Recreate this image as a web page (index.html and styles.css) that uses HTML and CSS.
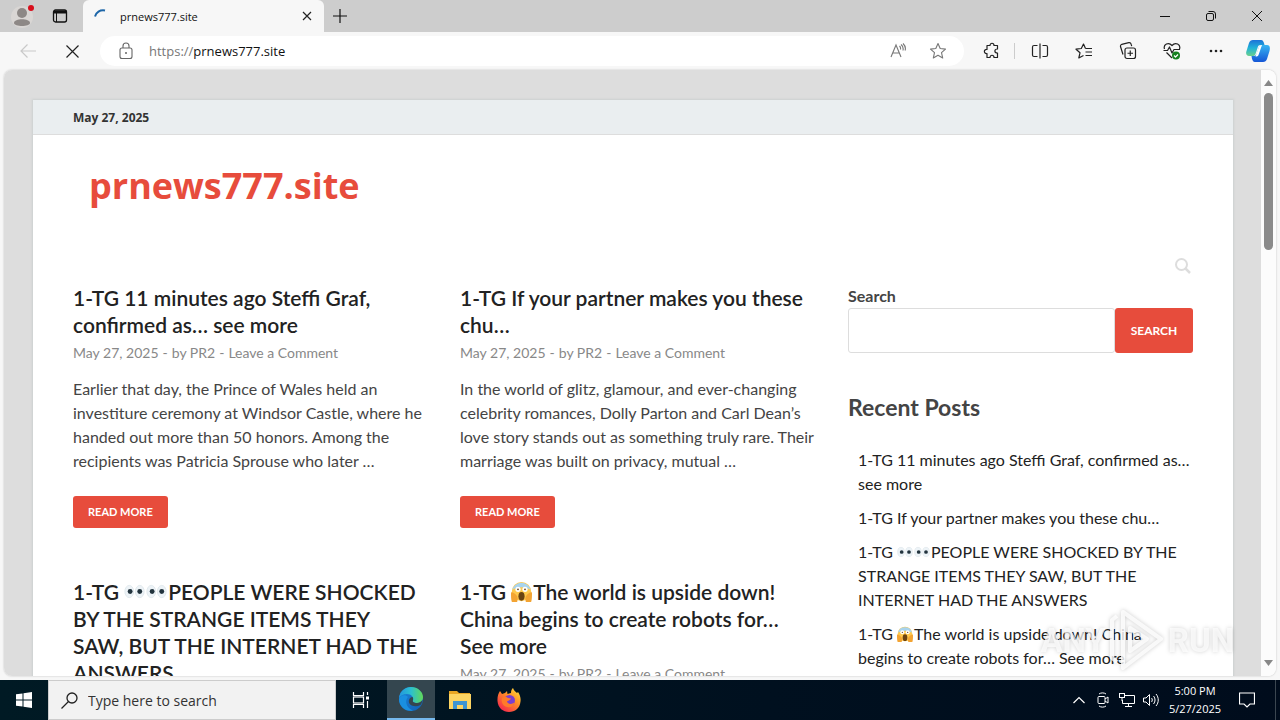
FILE: index.html
```html
<!DOCTYPE html>
<html lang="en">
<head>
    <meta charset="UTF-8">
    <meta name="viewport" content="width=device-width, initial-scale=1.0">
    <title>prnews777.site</title>
    <link rel="stylesheet" href="styles.css">
</head>
<body>
    <!-- shared shapes -->
    <svg class="defs" width="0" height="0" aria-hidden="true">
        <symbol id="eyes" viewBox="0 0 24 24">
            <ellipse cx="6" cy="12" rx="5" ry="7" fill="#edf3f7" stroke="#dfe7ec" stroke-width="1"/>
            <ellipse cx="18" cy="12" rx="5" ry="7" fill="#edf3f7" stroke="#dfe7ec" stroke-width="1"/>
            <circle cx="7" cy="12" r="2.800" fill="#22333d"/>
            <circle cx="18" cy="12" r="2.800" fill="#22333d"/>
        </symbol>
        <symbol id="scream" viewBox="0 0 24 24">
            <circle cx="12" cy="12" r="11" fill="#ffc94d"/>
            <path d="M1.400 10a11 11 0 0 1 21.200 0c-3-2-6-3-10.600-3s-8 1-10.600 3z" fill="#a8d4ee"/>
            <circle cx="8" cy="9.500" r="3" fill="#fff"/>
            <circle cx="16" cy="9.500" r="3" fill="#fff"/>
            <circle cx="8" cy="9.500" r="1" fill="#5b3f1d"/>
            <circle cx="16" cy="9.500" r="1" fill="#5b3f1d"/>
            <ellipse cx="12" cy="17.500" rx="3.500" ry="5" fill="#6b4312"/>
            <path d="M0 13c2-1 4 1 6 3s2 5 1 8H1c-1-3-1-7-1-11zM24 13c-2-1-4 1-6 3s-2 5-1 8h6c1-3 1-7 1-11z" fill="#f3a433"/>
        </symbol>
    </svg>

    <div class="tab-bar">
        <button class="profile" aria-label="Profile">
            <svg width="24" height="24" viewBox="0 0 24 24"><circle cx="11" cy="13" r="11" fill="#d9d6d4"/><circle cx="11" cy="9" r="5" fill="#8d8886"/><path d="M3 19c0-5 16-5 16 0 0 4-16 4-16 0z" fill="#8d8886"/><circle cx="20" cy="4" r="3" fill="#d80f1c"/></svg>
        </button>
        <button class="workspaces" aria-label="Tab actions">
            <svg width="16" height="16" viewBox="0 0 16 16" fill="none" stroke="#111"><rect x="1.500" y="2" width="13" height="12" rx="2" stroke-width="1.300"/><path d="M2 4h12" stroke-width="3"/><path d="M4.500 4v10"/></svg>
        </button>
        <div class="tab">
            <svg width="16" height="16" viewBox="0 0 16 16" fill="none" stroke="#1d66a8" stroke-width="2"><path d="M2 8.500C3 4.500 7 1.500 12 2.500"/></svg>
            <span class="tab-title">prnews777.site</span>
            <button class="tab-close" aria-label="Close tab">
                <svg width="10" height="10" viewBox="0 0 10 10" stroke="#222" stroke-width="1.200"><path d="M1 1l8 8M9 1l-8 8"/></svg>
            </button>
        </div>
        <button class="new-tab" aria-label="New tab">
            <svg width="14" height="14" viewBox="0 0 14 14" stroke="#111" stroke-width="1.200"><path d="M7 0v14M0 7h14"/></svg>
        </button>
        <div class="window-buttons">
            <button aria-label="Minimize"><svg width="10" height="10" viewBox="0 0 10 10" stroke="#111"><path d="M0 5.500h10"/></svg></button>
            <button aria-label="Restore"><svg width="10" height="10" viewBox="0 0 10 10" fill="none" stroke="#111"><rect x=".5" y="2.500" width="7" height="7" rx="1.500"/><path d="M2.500.5H7a2.500 2.500 0 0 1 2.500 2.500v4.500"/></svg></button>
            <button aria-label="Close"><svg width="10" height="10" viewBox="0 0 10 10" stroke="#111"><path d="M0 0l10 10M10 0L0 10"/></svg></button>
        </div>
    </div>

    <div class="toolbar">
        <button class="tool" aria-label="Back"><svg width="16" height="14" viewBox="0 0 16 14" fill="none" stroke="#c9c9c9" stroke-width="1.200"><path d="M16 7H1M7.500.5L1 7l6.500 6.500"/></svg></button>
        <button class="tool" aria-label="Stop"><svg width="13" height="13" viewBox="0 0 13 13" stroke="#222" stroke-width="1.200"><path d="M.5.5l12 12M12.500.5l-12 12"/></svg></button>
        <div class="address">
            <svg width="16" height="18" viewBox="0 0 16 18" fill="none" stroke="#666" stroke-width="1.100"><rect x="2" y="6" width="12" height="10.500" rx="2"/><path d="M5 6V4a3 3 0 0 1 6 0v2"/><circle cx="8" cy="11" r="1" fill="#666" stroke="none"/></svg>
            <span class="url"><span class="scheme">https://</span>prnews777.site</span>
            <button class="address-button" aria-label="Read aloud"><svg width="18" height="16" viewBox="0 0 18 16" fill="none" stroke="#777" stroke-width="1.100"><path d="M2 14L7 2l5 12M4 10h6"/><path d="M10.500 3c1 1 1.300 2 1 3.500M12 1.500c2 1.500 2.500 3.500 2 6M14 .5c2 2 3 4.500 2 7"/></svg></button>
            <button class="address-button" aria-label="Add to favorites"><svg width="18" height="18" viewBox="0 0 18 18" fill="none" stroke="#777" stroke-width="1.100" stroke-linejoin="round"><path d="M9 1.500l2.200 5 5.300.6-4 3.600 1.200 5.300L9 13.300 4.300 16l1.200-5.300-4-3.600 5.300-.6z"/></svg></button>
        </div>
        <button class="tool" aria-label="Extensions"><svg width="18" height="18" viewBox="0 0 18 18" fill="none" stroke="#222" stroke-width="1.200" stroke-linejoin="round"><path d="M4 3.500h3c0-3 4-3 4 0h3.500V7c-3.500 0-3.500 4 0 4v4.500H11c0-3-4-3-4 0H4v-4c-3.500.5-3.500-4.500 0-4z"/></svg></button>
        <div class="divider"></div>
        <button class="tool" aria-label="Split screen"><svg width="18" height="16" viewBox="0 0 18 16" fill="none" stroke="#222" stroke-width="1.200"><path d="M6.500 2.500H3A1.500 1.500 0 0 0 1.500 4v8A1.500 1.500 0 0 0 3 13.500h3.500M11.500 2.500H15A1.500 1.500 0 0 1 16.500 4v8a1.500 1.500 0 0 1-1.500 1.500h-3.500M9 .5v15"/></svg></button>
        <button class="tool" aria-label="Favorites"><svg width="18" height="16" viewBox="0 0 18 16" fill="none" stroke="#222" stroke-width="1.200" stroke-linejoin="round"><path d="M10.500 5.500L8.500 1 6.300 5.500l-5.300.7 4 3.600-1.200 5.200 4.700-2.500M10.500 5.500H17M10.500 9H17M10.500 12.500H17"/></svg></button>
        <button class="tool" aria-label="Collections"><svg width="18" height="18" viewBox="0 0 18 18" fill="none" stroke="#222" stroke-width="1.200"><rect x="6" y="6" width="10.500" height="10.500" rx="2"/><path d="M11.250 8.500v5.500M8.500 11.250H14M4 12.500L1.500 4.500a2 2 0 0 1 1.300-2.200l7-1.600a2 2 0 0 1 2.300 1.500l.6 2"/></svg></button>
        <button class="tool" aria-label="Browser essentials"><svg width="18" height="18" viewBox="0 0 18 18" fill="none" stroke="#222" stroke-width="1.200" stroke-linejoin="round"><path d="M1.500 7C0 2.500 5.500-.5 9 3.500c3.500-4 9-1 7.500 3.500M.5 8.500h4L6.500 5 9 11l2-3.500h6M3.500 10.500L9 16"/><circle cx="13" cy="13.500" r="4" fill="#16801f" stroke="none"/><path d="M11 13.500l1.500 1.500L15 12.500" stroke="#fff"/></svg></button>
        <button class="tool" aria-label="Settings and more"><svg width="14" height="4" viewBox="0 0 14 4" fill="#222"><circle cx="2" cy="2" r="1.300"/><circle cx="7" cy="2" r="1.300"/><circle cx="12" cy="2" r="1.300"/></svg></button>
        <button class="copilot" aria-label="Copilot">
            <svg width="24" height="24" viewBox="0 0 24 24">
                <defs>
                    <linearGradient id="cp1" x1="0" y1="0" x2="0" y2="1"><stop offset="0" stop-color="#1b72d8"/><stop offset=".5" stop-color="#20b3d8"/><stop offset="1" stop-color="#6bd08c"/></linearGradient>
                    <linearGradient id="cp2" x1="0" y1="0" x2="0" y2="1"><stop offset="0" stop-color="#38b5f2"/><stop offset="1" stop-color="#1556d6"/></linearGradient>
                </defs>
                <path d="M7 1h8c2 0 3 2 3.500 5h-4c-2 0-2.500 1-3 3l-2 6c-.5 1.500-1.500 2-3 2H3c-2.500 0-3.500-2-2.500-5L3 4c.7-2 2-3 4-3z" fill="url(#cp1)"/>
                <path d="M17 23H9c-2 0-3-2-3.500-6h2c2 0 3-1 3.500-3l2-6c.5-1.500 1.500-2 3-2h5c2.500 0 3.500 2 2.500 6l-2.500 8c-.7 2-2 3-4 3z" fill="url(#cp2)"/>
                <path d="M13 8c.5-1.500 1.500-2 3-2l-3.500 10c-.5 1-1.500 1.500-3 1.500z" fill="#fff"/>
            </svg>
        </button>
    </div>

    <div class="viewport">
        <div class="page">
            <div class="site">
                <div class="top-bar">May 27, 2025</div>
                <header class="site-header">
                    <h1 class="site-title"><a href="#">prnews777.site</a></h1>
                </header>
                <nav class="site-nav">
                    <button class="nav-search" aria-label="Open search"><svg width="18" height="18" viewBox="0 0 18 18" fill="none" stroke="#ddd" stroke-width="2"><circle cx="7.500" cy="7.500" r="5.500"/><path d="M11.500 11.500L16 16" stroke-width="2.500"/></svg></button>
                </nav>
                <div class="content">
                    <main class="posts">
                        <article class="post">
                            <h3><a href="#">1-TG 11 minutes ago Steffi Graf, confirmed as… see more</a></h3>
                            <div class="meta"><a href="#">May 27, 2025</a><span class="dash">-</span>by <a href="#">PR2</a><span class="dash">-</span><a href="#">Leave a Comment</a></div>
                            <p>Earlier that day, the Prince of Wales held an investiture ceremony at Windsor Castle, where he handed out more than 50 honors. Among the recipients was Patricia Sprouse who later …</p>
                            <a class="read-more" href="#">READ MORE</a>
                        </article>
                        <article class="post">
                            <h3><a href="#">1-TG If your partner makes you these chu…</a></h3>
                            <div class="meta"><a href="#">May 27, 2025</a><span class="dash">-</span>by <a href="#">PR2</a><span class="dash">-</span><a href="#">Leave a Comment</a></div>
                            <p>In the world of glitz, glamour, and ever-changing celebrity romances, Dolly Parton and Carl Dean’s love story stands out as something truly rare. Their marriage was built on privacy, mutual …</p>
                            <a class="read-more" href="#">READ MORE</a>
                        </article>
                        <article class="post">
                            <h3><a href="#">1-TG <svg class="emoji"><use href="#eyes"/></svg><svg class="emoji"><use href="#eyes"/></svg>PEOPLE WERE SHOCKED BY THE STRANGE ITEMS THEY SAW, BUT THE INTERNET HAD THE ANSWERS</a></h3>
                        </article>
                        <article class="post">
                            <h3><a href="#">1-TG <svg class="emoji"><use href="#scream"/></svg>The world is upside down! China begins to create robots for… See more</a></h3>
                            <div class="meta"><a href="#">May 27, 2025</a><span class="dash">-</span>by <a href="#">PR2</a><span class="dash">-</span><a href="#">Leave a Comment</a></div>
                        </article>
                    </main>
                    <aside class="sidebar">
                        <form class="search-form">
                            <label for="search">Search</label>
                            <div class="search-row">
                                <input type="search" id="search" name="s">
                                <button type="button">SEARCH</button>
                            </div>
                        </form>
                        <h2>Recent Posts</h2>
                        <ul>
                            <li><a href="#">1-TG 11 minutes ago Steffi Graf, confirmed as… see more</a></li>
                            <li><a href="#">1-TG If your partner makes you these chu…</a></li>
                            <li><a href="#">1-TG <svg class="emoji"><use href="#eyes"/></svg><svg class="emoji"><use href="#eyes"/></svg>PEOPLE WERE SHOCKED BY THE STRANGE ITEMS THEY SAW, BUT THE INTERNET HAD THE ANSWERS</a></li>
                            <li><a href="#">1-TG <svg class="emoji"><use href="#scream"/></svg>The world is upside down! China begins&nbsp;to create robots for… See more</a></li>
                        </ul>
                    </aside>
                </div>
            </div>
        </div>
        <div class="scrollbar">
            <svg width="9" height="6" viewBox="0 0 9 6" fill="#888"><path d="M0 6L4.500 0 9 6z"/></svg>
            <div class="thumb"></div>
            <svg class="down" width="9" height="6" viewBox="0 0 9 6" fill="#888"><path d="M0 0l4.500 6L9 0z"/></svg>
        </div>
    </div>

    <div class="watermark">
        <span>ANY</span>
        <svg width="56" height="64" viewBox="0 0 56 64" fill="none" stroke="#fff" stroke-opacity=".8" stroke-width="4" stroke-linejoin="round"><path d="M14 4l38 27-38 29z"/><path d="M21 20l17 11-17 12z"/><path d="M8 8l-5 4v38l5 4"/></svg>
        <span>RUN</span>
    </div>

    <div class="taskbar">
        <button class="start" aria-label="Start"><svg width="16" height="16" viewBox="0 0 16 16" fill="#fff"><path d="M0 2.300L6.500 1.400v6.100H0zM7.500 1.200L16 0v7.500H7.500zM0 8.500h6.500v6.100L0 13.700zM7.500 8.500H16V16l-8.500-1.200z"/></svg></button>
        <div class="task-search">
            <svg width="17" height="17" viewBox="0 0 17 17" fill="none" stroke="#222" stroke-width="1.300"><circle cx="11" cy="6" r="5"/><path d="M7.500 9.500L.5 16.500"/></svg>
            <input type="text" aria-label="Search" placeholder="Type here to search">
        </div>
        <button class="task" aria-label="Task view"><svg width="18" height="18" viewBox="0 0 18 18" fill="none" stroke="#fff" stroke-width="1.200"><path d="M1.500 1v3.500h10V1M1.500 17v-3.500h10V17M15.500 1v3M15.500 10v7"/><rect x="1.500" y="6" width="10" height="6"/><path d="M14 7h3" stroke-width="3"/></svg></button>
        <button class="task active" aria-label="Microsoft Edge">
            <svg width="24" height="24" viewBox="0 0 24 24">
                <defs>
                    <linearGradient id="ed1" x1="0" y1="0" x2="1" y2="0"><stop offset="0" stop-color="#2295df"/><stop offset=".5" stop-color="#2cc0cf"/><stop offset="1" stop-color="#62d957"/></linearGradient>
                    <linearGradient id="ed2" x1="0" y1="0" x2="1" y2="1"><stop offset="0" stop-color="#1b86dc"/><stop offset="1" stop-color="#1160b5"/></linearGradient>
                </defs>
                <circle cx="12" cy="12" r="12" fill="url(#ed2)"/>
                <path d="M0 11C1 4 6 0 12 0c7 0 12 5 12 10 0 4-3 6-6 6-3 0-5-1-4-3 1-3-2-6-6-6-4 0-7 2-8 4z" fill="url(#ed1)"/>
                <path d="M14 13c-1 2 1 3 4 3 2 0 4-1 5.500-3-.5 2-1 4-2 5-6 3-13 0-11.500-5 .5-2 2-3 3.500-3 .7 1 .8 2 .5 3z" fill="#36464e"/>
                <path d="M9 10c-4 4-1 12 5 13.500C7 25 0 20 0 12c2-4 6-5 9-2z" fill="#1a8fe0"/>
            </svg>
        </button>
        <button class="task" aria-label="File Explorer"><svg width="22" height="20" viewBox="0 0 22 20"><path d="M0 1h8l2 2h11v15H0z" fill="#e8a623"/><path d="M0 4h22v15H0z" fill="#fcd462"/><path d="M4 19v-8h14v8h-4v-4H8v4z" fill="#3e95d2"/></svg></button>
        <button class="task" aria-label="Firefox">
            <svg width="24" height="24" viewBox="0 0 24 24">
                <defs><linearGradient id="ff" x1="1" y1="0" x2=".2" y2="1"><stop offset="0" stop-color="#ffe93f"/><stop offset=".45" stop-color="#ff9026"/><stop offset="1" stop-color="#f5234f"/></linearGradient></defs>
                <path d="M3 3l2 3 3-1 2-2 .5 3L14 5c0-2 .5-4 2-5 1 3 3 4 4 5l1-1c2 3 3 6 2.500 9.500C23 20 18 24 12 24S1 20 .5 13C.3 9 1 6 3 3z" fill="url(#ff)"/>
                <circle cx="12.500" cy="12.500" r="5.500" fill="#7a3fd0"/>
                <path d="M5 10c2-2 4-2 6 0l3 .5c-1 2-3 2-4 3 1 3 5 3 7.500 1-1 4-5 6-9 4-3-1.500-4.500-5-3.500-8.500z" fill="#ff7b2a"/>
            </svg>
        </button>
        <div class="tray">
            <button aria-label="Show hidden icons"><svg width="12" height="8" viewBox="0 0 12 8" fill="none" stroke="#fff" stroke-width="1.200"><path d="M.5 7L6 1.500 11.500 7"/></svg></button>
            <button aria-label="Meet now"><svg width="12" height="16" viewBox="0 0 12 16" fill="none" stroke="#fff"><rect x="1" y="4.500" width="7" height="7" rx="1"/><path d="M8 7l3-2v6l-3-2M2 2c2-1.500 5-1.500 7 0M2 14c2 1.500 5 1.500 7 0"/></svg></button>
            <button aria-label="Network"><svg width="16" height="14" viewBox="0 0 16 14" fill="none" stroke="#fff"><path d="M6 2.500h9.500v8h-12V7M9.500 10.500v3M6 13.500h7"/><rect x=".5" y=".5" width="5" height="4"/><path d="M3 4.500V8"/></svg></button>
            <button aria-label="Volume"><svg width="17" height="14" viewBox="0 0 17 14" fill="none" stroke="#fff"><path d="M.5 5h2.500l3.500-3.500v11L3 9H.5zM8.500 5c1 1 1 3 0 4M10.500 3c2 2.500 2 5.500 0 8M13 1c3 3.500 3 8.500 0 12"/></svg></button>
            <div class="clock">5:00 PM<br>5/27/2025</div>
            <button class="notifications" aria-label="Notifications"><svg width="16" height="16" viewBox="0 0 16 16" fill="none" stroke="#fff" stroke-width="1.200"><path d="M.5 1h15v11H11l-3 3-3-3H.5z"/></svg></button>
        </div>
    </div>
</body>
</html>
```
FILE: styles.css
```css
* {
    box-sizing: border-box;
}
body {
    margin: 0;
    height: 100vh;
    display: flex;
    flex-direction: column;
    overflow: hidden;
    background: #f7f7f7;
    font-family: "Open Sans", "Noto Sans", sans-serif;
}
button {
    padding: 0;
    border: none;
    background: none;
    font-family: inherit;
    display: flex;
    align-items: center;
    justify-content: center;
}
a {
    color: inherit;
    text-decoration: none;
}
.defs {
    position: absolute;
}

/* tabs */
.tab-bar {
    display: flex;
    flex: none;
    height: 32px;
    background: #cdcdcd;
}
.profile {
    width: 44px;
    padding-left: 2px;
}
.workspaces {
    width: 32px;
}
.tab {
    display: flex;
    align-items: center;
    width: 241px;
    margin-left: 7px;
    padding: 0 10px;
    border-radius: 6px 6px 0 0;
    background: #f7f7f7;
}
.tab-title {
    flex: 1;
    padding-left: 11px;
    font-size: 11px;
    color: #111;
}
.tab-close {
    width: 14px;
    height: 20px;
}
.new-tab {
    width: 32px;
}
.window-buttons {
    display: flex;
    margin-left: auto;
}
.window-buttons button {
    width: 46px;
}

/* address bar */
.toolbar {
    display: flex;
    align-items: center;
    flex: none;
    height: 38px;
    padding: 0 2px 0 6px;
}
.tool {
    width: 44px;
    height: 32px;
}
.address {
    display: flex;
    align-items: center;
    flex: 1;
    height: 30px;
    margin: 0 6px;
    padding: 0 6px 0 18px;
    border-radius: 15px;
    background: #fff;
}
.url {
    flex: 1;
    padding-left: 15px;
    font-size: 13px;
    color: #111;
}
.scheme {
    color: #777;
}
.address-button {
    width: 40px;
    height: 26px;
}
.divider {
    width: 1px;
    height: 16px;
    margin-right: 3px;
    background: #ccc;
}
.copilot {
    width: 40px;
    height: 32px;
}

/* web page */
.viewport {
    display: flex;
    flex: 1;
    min-height: 0;
    margin: 0 4px 4px;
    border-radius: 8px;
    overflow: hidden;
    background: #fff;
    box-shadow: 0 0 2px #bbb;
}
.page {
    flex: 1;
    overflow: hidden;
    padding: 30px 28px 0 29px;
    background: #ddd;
    font-family: Lato, sans-serif;
    color: #444;
}
.site {
    background: #fff;
    box-shadow: 0 0 2px 1px #ccd0d0;
}
.top-bar {
    height: 35px;
    padding: 0 40px;
    border-bottom: 1px solid #ddd;
    background: #eaeef0;
    font: bold 12px/36px "Open Sans", sans-serif;
    color: #333;
}
.site-header {
    padding: 25px 56px;
}
.site-title {
    margin: 0;
    font: bold 36px/52px "Open Sans", sans-serif;
    color: #e74c3c;
}
.site-nav {
    display: flex;
    justify-content: flex-end;
    padding: 19px 40px 0;
}
.nav-search {
    width: 20px;
    height: 20px;
}
.content {
    display: flex;
    gap: 41px;
    padding: 8px 40px 0;
}
.posts {
    display: grid;
    grid-template-columns: 1fr 1fr;
    gap: 50px 40px;
    flex: 1;
}
.post h3 {
    margin: 0 -4px 5px 0;
    font-size: 21px;
    font-weight: 600;
    line-height: 27px;
    color: #222;
}
.meta {
    font-size: 14px;
    line-height: 20px;
    color: #888;
}
.dash {
    margin: 0 4px;
}
.post p {
    margin: 14px -14px 23px 0;
    font-size: 16px;
    line-height: 24px;
}
.read-more {
    display: inline-block;
    padding: 0 15px;
    border-radius: 3px;
    background: #e74c3c;
    font-size: 11px;
    font-weight: bold;
    line-height: 32px;
    color: #fff;
}
.emoji {
    width: 1em;
    height: 1em;
    margin-right: 1px;
    vertical-align: -2px;
}
.sidebar {
    width: 345px;
}
.search-form label {
    display: block;
    font-size: 16px;
    font-weight: bold;
    line-height: 24px;
}
.search-row {
    display: flex;
    height: 45px;
}
.search-row input {
    flex: 1;
    min-width: 0;
    padding: 0 10px;
    border: 1px solid #ddd;
    border-radius: 3px;
    outline: none;
}
.search-row button {
    width: 78px;
    border-radius: 3px;
    background: #e74c3c;
    font-size: 12px;
    font-weight: bold;
    color: #fff;
}
.sidebar h2 {
    margin: 38px 0 25px;
    font-size: 23px;
    line-height: 32px;
}
.sidebar ul {
    margin: 0;
    padding: 0 0 0 10px;
    list-style: none;
}
.sidebar li {
    margin-bottom: 10px;
    font-size: 16px;
    line-height: 24px;
    color: #222;
}
.scrollbar {
    display: flex;
    flex-direction: column;
    align-items: center;
    width: 15px;
    padding: 10px 0;
    background: #fcfcfc;
}
.thumb {
    width: 9px;
    height: 157px;
    margin-top: 7px;
    border-radius: 5px;
    background: #8b8b8b;
}
.down {
    margin-top: auto;
}

/* watermark over the page corner */
.watermark {
    position: absolute;
    right: 46px;
    bottom: 48px;
    display: flex;
    align-items: center;
    gap: 3px;
    font-family: Roboto, sans-serif;
    font-size: 33px;
    font-weight: bold;
    color: rgba(255, 255, 255, 0.7);
    filter: drop-shadow(0 0 2px rgba(0, 0, 0, 0.25));
    pointer-events: none;
}

/* taskbar */
.taskbar {
    display: flex;
    flex: none;
    height: 40px;
    background: linear-gradient(90deg, #001a24, #00101f 60%, #000c1c);
    color: #fff;
}
.start {
    width: 48px;
}
.task-search {
    display: flex;
    align-items: center;
    width: 288px;
    padding: 0 12px;
    border: 1px solid #ccc;
    background: #f2f2f2;
}
.task-search input {
    flex: 1;
    min-width: 0;
    padding: 0 0 0 10px;
    border: none;
    outline: none;
    background: none;
    font-family: inherit;
    font-size: 14px;
}
.task-search input::placeholder {
    color: #333;
}
.task {
    width: 49px;
}
.task.active {
    margin-left: 2px;
    width: 48px;
    background: #34464f;
    border-bottom: 2px solid #76b9ed;
}
.tray {
    display: flex;
    margin-left: auto;
    padding-right: 8px;
    border-right: 1px solid #3b4650;
    margin-right: 4px;
}
.tray button {
    width: 24px;
}
.clock {
    width: 64px;
    font-size: 11px;
    line-height: 18px;
    padding-top: 2px;
    text-align: center;
}
.tray .notifications {
    width: 40px;
}
```
